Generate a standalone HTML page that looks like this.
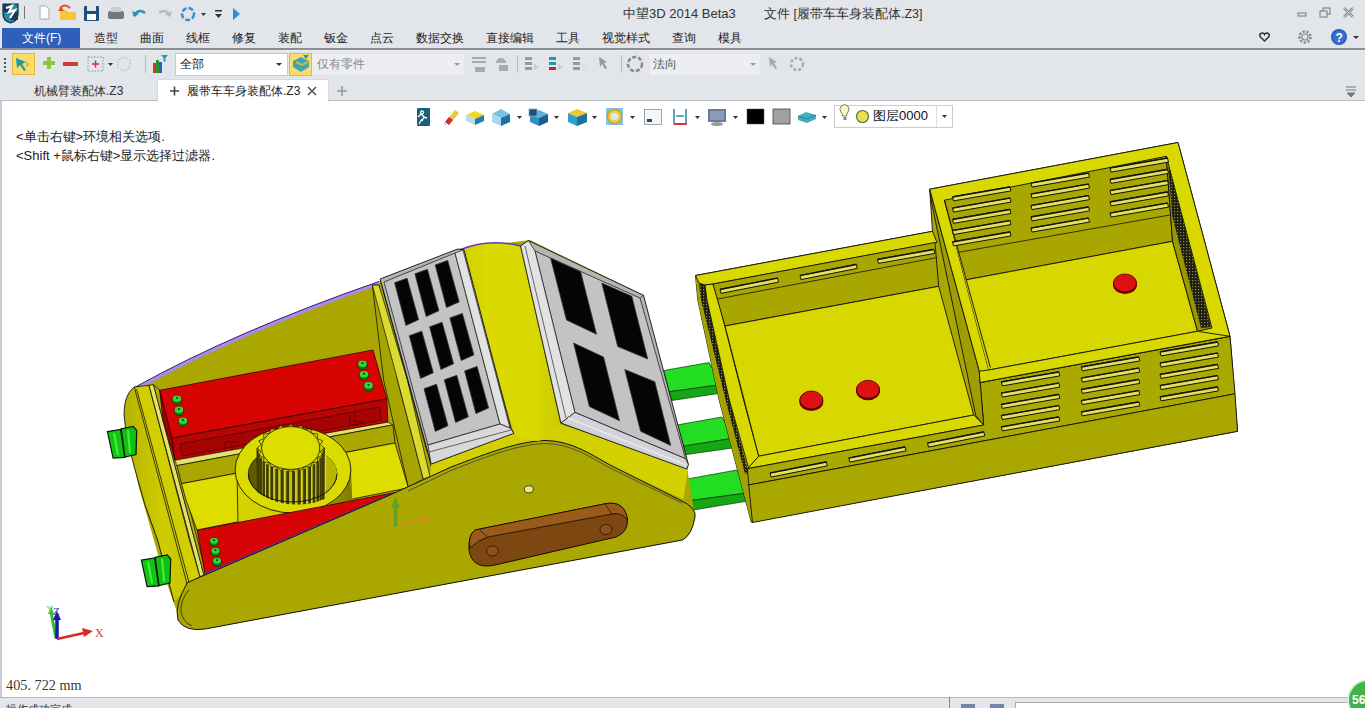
<!DOCTYPE html>
<html><head><meta charset="utf-8">
<style>
*{margin:0;padding:0;box-sizing:border-box}
html,body{width:1365px;height:708px;overflow:hidden;background:#e2e5e9;font-family:"Liberation Sans",sans-serif;position:relative}
.a{position:absolute}
.t{position:absolute;font-size:12px;color:#222;white-space:nowrap;line-height:14px}
#title{left:0;top:0;width:1365px;height:27px;background:#e2e5e9}
#menu{left:0;top:27px;width:1365px;height:23px;background:#e2e5e9;border-bottom:2px solid #8a8e94}
#tool{left:0;top:50px;width:1365px;height:29px;background:#e2e5e9;border-top:1px solid #eceef1}
#tabs{left:0;top:79px;width:1365px;height:22px;background:#e2e5e9;border-bottom:1px solid #b9bdc2}
#view{left:0;top:101px;width:1365px;height:596px;background:#fff;border-left:2px solid #c9ccd1}
#status{left:0;top:697px;width:1365px;height:11px;background:#e3e6ea;border-top:1px solid #b4b8bd}
</style></head><body>
<div class="a" id="title"></div>
<div class="a" id="menu"></div>
<div class="a" id="tool"></div>
<div class="a" id="tabs"></div>
<div class="a" id="view"></div>
<div class="a" id="status"></div>
<!-- TITLE BAR -->
<svg class="a" style="left:0;top:0" width="260" height="27" viewBox="0 0 260 27">
 <g>
  <path d="M3 4 L18 4 L18 14 Q18 21 10.5 23 Q3 21 3 14 Z" fill="#2a85a8" stroke="#0d2a3a" stroke-width="1.2"/><path d="M3 4 h7.5 v8 h-7.5z M10.5 12 h7.5 v8 h-7.5z" fill="#143c52"/>
  <path d="M6 8 L12 6 L9 12 L15 10 L10 18" stroke="#fff" stroke-width="2.2" fill="none"/>
 </g>
 <rect x="24" y="6" width="1" height="13" fill="#777"/>
 <path d="M40 6 h6 l3 3 v10 h-9 z" fill="#fff" stroke="#aaa" stroke-width="1"/>
 <path d="M60 10 h6 l2 2 h8 v8 h-16 z" fill="#f5c53a"/><path d="M61 6 l-3 5 h6 z" fill="#e2501e"/><path d="M60 8 q5 -5 10 0" stroke="#e2501e" stroke-width="2" fill="none"/>
 <rect x="84" y="6" width="15" height="15" rx="1" fill="#1f4e79"/><rect x="87" y="6" width="9" height="5" fill="#dfe6ee"/><rect x="87" y="14" width="9" height="6" fill="#fff"/>
 <rect x="108" y="11" width="16" height="8" rx="2" fill="#777"/><rect x="111" y="7" width="10" height="5" fill="#ccc"/>
 <path d="M134 16 q4 -8 11 -3" stroke="#2b8fb0" stroke-width="2.5" fill="none"/><path d="M132 11 l2 6 l5 -3z" fill="#2b8fb0"/>
 <path d="M170 16 q-4 -8 -11 -3" stroke="#b8bcc0" stroke-width="2.5" fill="none"/><path d="M172 11 l-2 6 l-5 -3z" fill="#b8bcc0"/>
 <circle cx="188" cy="14" r="6" stroke="#3c8ec2" stroke-width="2.5" fill="none" stroke-dasharray="5 2"/>
 <path d="M201 13 h5 l-2.5 3z" fill="#333"/>
 <rect x="215" y="10" width="7" height="1.5" fill="#333"/><path d="M215 14 h7 l-3.5 4z" fill="#333"/>
 <path d="M233 8 l7 6 l-7 6z" fill="#2b8fd6"/>
</svg>
<div class="t" style="left:623px;top:7px;font-size:13px;color:#333">中望3D 2014 Beta3</div>
<div class="t" style="left:764px;top:7px;font-size:12.5px;color:#333">文件 [履带车车身装配体.Z3]</div>
<svg class="a" style="left:1290px;top:0" width="75" height="27">
 <rect x="8" y="13" width="8" height="3" fill="none" stroke="#777" stroke-width="1"/>
 <rect x="33" y="8" width="7" height="6" fill="none" stroke="#777"/><rect x="30" y="11" width="7" height="6" fill="#e2e5e9" stroke="#777"/>
 <path d="M54 8 l9 9 M63 8 l-9 9" stroke="#888" stroke-width="2.5"/><path d="M54 8 l9 9 M63 8 l-9 9" stroke="#e2e5e9" stroke-width="0.8"/>
</svg>
<!-- MENU -->
<div class="a" style="left:2px;top:28px;width:78px;height:20px;background:#2f5fbd"></div>
<div class="t" style="left:22px;top:31px;color:#fff">文件(F)</div>
<div class="t" style="left:94px;top:31px">造型</div>
<div class="t" style="left:140px;top:31px">曲面</div>
<div class="t" style="left:186px;top:31px">线框</div>
<div class="t" style="left:232px;top:31px">修复</div>
<div class="t" style="left:278px;top:31px">装配</div>
<div class="t" style="left:324px;top:31px">钣金</div>
<div class="t" style="left:370px;top:31px">点云</div>
<div class="t" style="left:416px;top:31px">数据交换</div>
<div class="t" style="left:486px;top:31px">直接编辑</div>
<div class="t" style="left:556px;top:31px">工具</div>
<div class="t" style="left:602px;top:31px">视觉样式</div>
<div class="t" style="left:672px;top:31px">查询</div>
<div class="t" style="left:718px;top:31px">模具</div>
<svg class="a" style="left:1250px;top:27px" width="115" height="21">
 <path d="M14.5 14 l-4.5 -4.5 a2.3 2.3 0 0 1 4.5 -2 a2.3 2.3 0 0 1 4.5 2 z" fill="none" stroke="#333" stroke-width="1.4"/>
 <circle cx="55" cy="10" r="5.5" fill="none" stroke="#888" stroke-width="2.5" stroke-dasharray="2.2 1.6"/><circle cx="55" cy="10" r="3" fill="none" stroke="#888" stroke-width="1.2"/>
 <circle cx="89" cy="10" r="8" fill="#2a5ab5"/><circle cx="89" cy="10" r="6.5" fill="#3a6fd0"/><text x="85.5" y="14.5" font-size="12" font-weight="bold" fill="#fff" font-family="Liberation Sans">?</text>
 <path d="M103 9 h6 l-3 3z" fill="#333"/>
</svg>
<!-- TOOLBAR -->
<svg class="a" style="left:0;top:49px" width="820" height="30">
 <g fill="#555"><rect x="4" y="9" width="2" height="2"/><rect x="4" y="13" width="2" height="2"/><rect x="4" y="17" width="2" height="2"/><rect x="4" y="21" width="2" height="2"/></g>
 <rect x="12.5" y="4.5" width="22" height="21" fill="#fbdc6b" stroke="#e3b93a"/>
 <path d="M16 9 l10 4 l-4 2 l4 6 l-2 1 l-4 -6 l-3 3z" fill="#1a9bb0"/><path d="M26 12 l3 3 l-2 4z" fill="#e9a51a"/>
 <path d="M43 12 h4 v-4 h4 v4 h4 v4 h-4 v4 h-4 v-4 h-4z" fill="#8cc63e"/>
 <rect x="63" y="13" width="15" height="4" fill="#d33b3b"/>
 <rect x="88" y="8" width="15" height="14" fill="none" stroke="#6a9bc9" stroke-dasharray="1.5 1.5"/><path d="M92 15 h7 M95.5 11.5 v7" stroke="#e23" stroke-width="1.5"/>
 <path d="M108 14 h5 l-2.5 3z" fill="#333"/>
 <path d="M124 8 l6 3.5 v7 l-6 3.5 l-6 -3.5 v-7z" fill="none" stroke="#8fb4d8" stroke-dasharray="1.5 1.5"/>
 <rect x="145" y="6" width="1" height="18" fill="#bbb"/>
 <rect x="153" y="14" width="3" height="10" fill="#d3352b"/><rect x="156" y="11" width="3" height="13" fill="#2d8f3a"/><rect x="159" y="13" width="3" height="11" fill="#2f60b5"/>
 <path d="M161 6 h7 l-2.5 3 v4 l-2 -1 v-3z" fill="#1f9bb5"/>
 <rect x="175.5" y="4.5" width="112" height="22" fill="#fff" stroke="#c6c9ce"/>
 <path d="M276 14 h6 l-3 3z" fill="#333"/>
 <rect x="289.5" y="4.5" width="22" height="22" fill="#fbdc6b" stroke="#e3b93a"/>
 <path d="M293 12 l8 -4 l8 4 v6 l-8 5 l-8 -5z" fill="#3aa8b8"/><path d="M296 13 l6 3 l6 -3" stroke="#e8b020" stroke-width="2" fill="none"/><path d="M303 6 h6 l-3 4z" fill="#1f9bb5"/>
 <rect x="312" y="5" width="152" height="21" fill="#eceef1"/>
 <path d="M454 14 h6 l-3 3z" fill="#999"/>
 <g fill="#aaa"><rect x="472" y="8" width="14" height="2"/><rect x="472" y="12" width="14" height="2"/><rect x="475" y="18" width="10" height="5"/></g>
 <g fill="#aaa"><path d="M496 14 a5 5 0 0 1 10 0z"/><rect x="499" y="16" width="9" height="6"/></g>
 <rect x="517" y="6" width="1" height="18" fill="#bbb"/>
 <g fill="#999"><rect x="525" y="8" width="7" height="3"/><rect x="525" y="13" width="7" height="3"/><rect x="525" y="18" width="7" height="3"/><path d="M534 14 l5 5 l-5 2z" fill="#ccc"/></g>
 <g><rect x="549" y="8" width="7" height="3" fill="#1b9aa8"/><rect x="549" y="13" width="7" height="3" fill="#1b9aa8"/><rect x="549" y="18" width="7" height="3" fill="#c23"/><path d="M558 14 l5 5 l-5 2z" fill="#ccc"/></g>
 <g fill="#999"><rect x="573" y="8" width="7" height="3"/><rect x="573" y="13" width="7" height="3"/><rect x="573" y="18" width="7" height="3"/><path d="M582 14 l5 5 l-5 2z" fill="#ddd"/></g>
 <path d="M599 8 l8 5 l-3 1 l3 5 l-2 1 l-3 -5 l-2 3z" fill="#999"/>
 <rect x="621" y="6" width="1" height="18" fill="#bbb"/>
 <circle cx="635" cy="15" r="7" fill="none" stroke="#888" stroke-width="2.5" stroke-dasharray="4 2"/>
 <rect x="650" y="5" width="110" height="21" fill="#eceef1"/>
 <path d="M750 14 h6 l-3 3z" fill="#999"/>
 <path d="M769 8 l8 5 l-3 1 l3 5 l-2 1 l-3 -5 l-2 3z" fill="#aaa"/>
 <circle cx="797" cy="15" r="6" fill="none" stroke="#aaa" stroke-width="2.5" stroke-dasharray="3 2"/>
</svg>
<div class="t" style="left:180px;top:57px;color:#111">全部</div>
<div class="t" style="left:317px;top:57px;color:#888">仅有零件</div>
<div class="t" style="left:653px;top:57px;color:#555">法向</div>
<!-- TABS -->
<div class="t" style="left:34px;top:84px;color:#333">机械臂装配体.Z3</div>
<div class="a" style="left:157px;top:79px;width:172px;height:23px;background:#fff;border:1px solid #d6d9dd;border-bottom:none"></div>
<svg class="a" style="left:165px;top:82px" width="200" height="18">
 <path d="M5 9 h9 M9.5 4.5 v9" stroke="#444" stroke-width="1.6"/>
 <path d="M143 5 l8 8 M151 5 l-8 8" stroke="#555" stroke-width="1.6"/>
 <path d="M172 9 h10 M177 4 v10" stroke="#999" stroke-width="1.6"/>
</svg>
<div class="t" style="left:187px;top:84px;color:#222">履带车车身装配体.Z3</div>
<svg class="a" style="left:1340px;top:82px" width="25" height="18"><path d="M6 5 h10 M6 8 h10 M7 11 l4 4 l4 -4z" stroke="#777" fill="#777" stroke-width="1"/></svg>
<!-- STATUS -->
<div class="a" style="left:949px;top:697px;width:1px;height:11px;background:#888"></div>
<div class="a" style="left:961px;top:704px;width:14px;height:4px;background:#7486b0"></div>
<div class="a" style="left:990px;top:704px;width:14px;height:4px;background:#7486b0"></div>
<div class="a" style="left:1015px;top:702px;width:350px;height:6px;background:#fff;border-top:1px solid #aaa;border-left:1px solid #aaa"></div>
<div class="a" style="left:1347px;top:679px;width:42px;height:42px;border-radius:50%;background:#43b04a;border:2px solid #d7f0d6"></div>
<div class="t" style="left:1352px;top:693px;color:#fff;font-weight:bold;font-size:12px">56</div>
<div class="t" style="left:6px;top:702px;color:#333;font-size:11px">操作成功完成</div>
<div class="t" style="left:16px;top:129px;font-size:13px;color:#222;line-height:16px">&lt;单击右键&gt;环境相关选项.</div>
<div class="t" style="left:16px;top:148px;font-size:13px;color:#222;line-height:16px">&lt;Shift +鼠标右键&gt;显示选择过滤器.</div>
<svg class="a" style="left:400px;top:101px" width="560" height="30">
 <!-- exit -->
 <rect x="17" y="7" width="13" height="18" rx="1" fill="#1d5f7a"/>
 <path d="M22 10 a1.5 1.5 0 1 0 0.1 0 M21 13 l3 3 l-2 4 M23 16 l4 1 M21 13 l-3 3 M22 18 l-3 5" stroke="#fff" stroke-width="1.3" fill="none"/>
 <!-- eraser -->
 <path d="M45 21 l10 -12 l4 3 l-10 12z" fill="#e8c840"/><path d="M45 21 l4 -5 l4 3 l-4 5z" fill="#c83040"/><path d="M44 22 l2 2" stroke="#aaa"/>
 <!-- box yellow -->
 <path d="M66 14 l9 -4 l9 4 l-9 4z" fill="#f0d820"/><path d="M66 14 v6 l9 4 v-6z" fill="#b8dcef"/><path d="M84 14 v6 l-9 4 v-6z" fill="#2a78a8"/>
 <!-- blue cube -->
 <path d="M92 13 l9 -5 l9 5 l-9 4z" fill="#7ac0e0"/><path d="M92 13 v8 l9 4 v-8z" fill="#a8d8f0"/><path d="M110 13 v8 l-9 4 v-8z" fill="#1f6f9f"/>
 <path d="M117 15 h5 l-2.5 3z" fill="#333"/>
 <!-- screen box -->
 <path d="M130 13 l9 -4 l9 4 l-9 4z" fill="#5ab0d8"/><path d="M130 13 v8 l9 4 v-8z" fill="#2f8fc0"/><path d="M148 13 v8 l-9 4 v-8z" fill="#1b5f8f"/><rect x="129" y="8" width="8" height="7" fill="#1b4f7a" stroke="#8ac" stroke-width="0.8"/>
 <path d="M154 15 h5 l-2.5 3z" fill="#333"/>
 <!-- box yellow top blue -->
 <path d="M168 12 l9 -4 l10 4 l-10 4z" fill="#f0c830"/><path d="M168 12 v9 l9 4 v-9z" fill="#2f9fd0"/><path d="M187 12 v9 l-10 4 v-9z" fill="#1f6fa0"/>
 <path d="M192 15 h5 l-2.5 3z" fill="#333"/>
 <!-- ring -->
 <rect x="206" y="7" width="17" height="17" fill="#7ec3e8"/><circle cx="214.5" cy="15.5" r="7" fill="#e8d060" stroke="#c8a020" stroke-width="1.5"/><circle cx="214.5" cy="15.5" r="3.5" fill="#dfe8f0"/>
 <path d="M230 15 h5 l-2.5 3z" fill="#333"/>
 <!-- frame -->
 <rect x="244.5" y="8.5" width="17" height="15" fill="#f4f6f8" stroke="#9aa"/><rect x="247" y="18" width="5" height="3" fill="#1e4f6a"/>
 <!-- dim -->
 <path d="M274 8 v15 M286 8 v15 M276 15 h8" stroke="#3a8ca8" stroke-width="1.6"/><rect x="274" y="22" width="13" height="2" fill="#d33"/>
 <path d="M295 15 h5 l-2.5 3z" fill="#333"/>
 <!-- monitor -->
 <rect x="308" y="8" width="18" height="13" fill="#6a7a98"/><rect x="310" y="10" width="14" height="9" fill="#8a9ab8"/><ellipse cx="317" cy="23" rx="6" ry="2" fill="#999"/>
 <path d="M333 15 h5 l-2.5 3z" fill="#333"/>
 <rect x="347" y="8" width="17" height="15" fill="#000" stroke="#555" stroke-width="0.5"/>
 <rect x="373" y="8" width="17" height="15" fill="#a0a0a0" stroke="#444" stroke-width="0.8"/>
 <path d="M398 15 l8 -4 l10 3 v4 l-9 4 l-9 -3z" fill="#40b0c0"/><path d="M398 15 l9 3 l9 -4" stroke="#2a8090" fill="none"/>
 <path d="M422 15 h5 l-2.5 3z" fill="#333"/>
 <rect x="434.5" y="4.5" width="118" height="22" fill="#fff" stroke="#ccc"/>
 <line x1="536.5" y1="5" x2="536.5" y2="26" stroke="#ddd"/>
 <path d="M441 11 a4.5 4.5 0 1 1 7 0 q-1.5 2 -1.5 4 h-4 q0 -2 -1.5 -4z" fill="#fff8c0" stroke="#555" stroke-width="0.8"/><rect x="443.5" y="16" width="3" height="3" fill="#888"/>
 <circle cx="462.5" cy="15.5" r="6" fill="#e8e050" stroke="#4a7a3a" stroke-width="1.2"/>
 <path d="M542 14 h5 l-2.5 3z" fill="#333"/>
</svg>
<div class="t" style="left:873px;top:108px;font-size:13px;color:#111;line-height:16px">图层0000</div>
<!-- triad -->
<svg class="a" style="left:40px;top:598px" width="70" height="46">
 <line x1="16" y1="40" x2="11" y2="14" stroke="#33bb33" stroke-width="3"/>
 <path d="M8 16 l3 -8 l3 8z" fill="#33bb33"/>
 <line x1="17" y1="41" x2="17" y2="20" stroke="#1a1aaa" stroke-width="3.5"/>
 <path d="M13 22 l4 -9 l4 9z" fill="#1a1aaa"/>
 <line x1="17" y1="41" x2="44" y2="35" stroke="#d82a2a" stroke-width="2.5"/>
 <path d="M42 30 l11 3 l-9 6z" fill="#d82a2a"/>
 <text x="6" y="15" font-size="11" fill="#7bd07b" font-family="Liberation Serif">Y</text>
 <text x="13" y="17" font-size="11" fill="#3a3aaa" font-family="Liberation Serif">Z</text>
 <text x="55" y="39" font-size="12" fill="#d84040" font-family="Liberation Serif">X</text>
</svg>
<div class="t" style="left:6px;top:677px;font-family:'Liberation Serif',serif;font-size:15px;color:#3a3a3a;line-height:16px;transform:scaleX(0.95);transform-origin:0 0">405.&nbsp;722 mm</div>
<svg class="a" style="left:0;top:0" width="1365" height="708" viewBox="0 0 1365 708">
<polygon points="663.8,370.5 709.0,362.6 721.0,384.6 669.0,391.8" fill="#22dd22" stroke="#063306" stroke-width="0.7" />
<polygon points="669.0,391.8 721.6,384.6 721.6,393.0 671.8,400.5" fill="#15a815" stroke="#063306" stroke-width="0.7" />
<polygon points="677.0,425.0 722.0,417.0 734.0,438.0 683.7,446.2" fill="#22dd22" stroke="#063306" stroke-width="0.7" />
<polygon points="683.7,446.2 734.9,438.0 736.0,447.5 685.0,454.7" fill="#15a815" stroke="#063306" stroke-width="0.7" />
<polygon points="685.0,479.4 736.8,470.0 748.8,492.7 690.4,500.6" fill="#22dd22" stroke="#063306" stroke-width="0.7" />
<polygon points="690.4,500.6 749.5,492.7 750.8,500.6 693.0,510.0" fill="#15a815" stroke="#063306" stroke-width="0.7" />
<defs><pattern id="mesh" width="3" height="3" patternUnits="userSpaceOnUse"><rect width="3" height="3" fill="#1e1e10"/><rect x="1" y="1" width="1.2" height="1.2" fill="#8c8a50"/></pattern></defs>
<path d="M695.5,275.5 L932.5,231.3 L929.7,189.2 L1178,142.5 L1230,336.3 L1237.5,431.3 L751.3,522.2 L719.2,400 L697.8,300 Z" fill="#aaa800" stroke="#111" stroke-width="0.9"/>
<path d="M695.5,275.5 L697.8,300 L719.2,400 L751.3,522.2 L747.7,469.8 L748.6,473.5 L729.3,400 L707,300 L705,285 Z" fill="#a4a200" stroke="none"/>
<polygon points="699.0,283.0 701.0,300.0 725.6,400.0 744.9,473.5 748.6,473.5 729.3,400.0 707.0,300.0 705.0,285.0" fill="url(#mesh)" stroke="none" />
<polygon points="695.5,275.5 932.5,231.3 937.0,242.5 713.0,284.0 705.0,285.0 699.0,283.0" fill="#d9d900" stroke="#111" stroke-width="0.9" />
<polygon points="705.0,285.0 713.0,284.0 718.2,300.0 743.6,400.0 758.7,456.2 748.6,468.0 729.3,400.0 707.0,300.0" fill="#d9d900" stroke="#111" stroke-width="0.9" />
<polygon points="713.0,284.0 935.0,242.5 938.7,286.3 725.0,326.0" fill="#a9a600" stroke="#111" stroke-width="0.9" />
<line x1="717.5" y1="299" x2="937.5" y2="257.5" stroke="#111" stroke-width="0.8"/>
<polygon points="725.0,326.0 938.7,286.3 973.7,415.0 758.7,456.2" fill="#d8d800" stroke="#111" stroke-width="0.9" />
<polygon points="747.5,468.7 758.7,456.2 973.7,415.0 983.7,425.0" fill="#d9d900" stroke="#111" stroke-width="0.9" />
<polygon points="747.5,468.7 983.7,425.0 980.0,382.5 1230.0,336.3 1235.0,393.8 748.7,485.0" fill="#aaa900" stroke="#111" stroke-width="0.9" />
<polygon points="748.7,485.0 1235.0,393.8 1237.5,431.3 752.5,522.5" fill="#aaa800" stroke="#111" stroke-width="0.9" />
<polygon points="929.7,189.2 931.5,202.0 975.7,415.3 983.7,425.0 979.3,371.2" fill="#a09d00" stroke="#111" stroke-width="0.9" />
<polygon points="929.7,189.2 1178.0,142.5 1230.0,336.3 980.0,382.5 979.3,371.2" fill="#d9d900" stroke="#111" stroke-width="0.9" />
<polygon points="944.4,200.2 1166.3,156.3 1172.5,241.3 965.0,280.0" fill="#a9a600" stroke="#111" stroke-width="0.9" />
<line x1="957.5" y1="252.5" x2="1170" y2="215" stroke="#111" stroke-width="0.8"/>
<polygon points="965.0,280.0 1172.5,241.3 1197.5,331.3 988.7,370.0" fill="#d8d800" stroke="#111" stroke-width="0.9" />
<polygon points="944.4,200.2 965.0,280.0 988.7,370.0 990.4,367.5" fill="#cccb00" stroke="none" />
<line x1="944.4" y1="200.2" x2="990.4" y2="367.5" stroke="#111" stroke-width="0.9"/>
<polygon points="1166.3,156.3 1172.5,241.3 1197.5,331.3 1212.0,328.0" fill="#9a9700" stroke="#111" stroke-width="0.9" />
<polygon points="1168.0,162.0 1172.0,215.0 1201.0,328.0 1211.0,327.0" fill="url(#mesh)" stroke="none" />
<polygon points="979.3,371.2 988.7,370.0 1197.5,331.3 1230.0,336.3 980.0,382.5" fill="#d9d900" stroke="#111" stroke-width="0.9" />
<polygon points="720.0,289.2 777.5,277.9 778.5,282.1 721.0,293.4" fill="#e0df66" stroke="#151500" stroke-width="1"/><line x1="720" y1="289.5" x2="777.5" y2="278.2" stroke="#151500" stroke-width="1.3"/>
<polygon points="800.0,275.4 856.3,264.2 857.3,268.4 801.0,279.6" fill="#e0df66" stroke="#151500" stroke-width="1"/><line x1="800" y1="275.7" x2="856.3" y2="264.5" stroke="#151500" stroke-width="1.3"/>
<polygon points="877.5,259.2 933.8,249.2 934.8,253.4 878.5,263.4" fill="#e0df66" stroke="#151500" stroke-width="1"/><line x1="877.5" y1="259.5" x2="933.8" y2="249.50000000000003" stroke="#151500" stroke-width="1.3"/>
<polygon points="770.0,472.9 826.3,461.7 827.3,465.9 771.0,477.1" fill="#e0df66" stroke="#151500" stroke-width="1"/><line x1="770" y1="473.2" x2="826.3" y2="462.0" stroke="#151500" stroke-width="1.3"/>
<polygon points="848.8,457.9 905.0,446.7 906.0,450.9 849.8,462.1" fill="#e0df66" stroke="#151500" stroke-width="1"/><line x1="848.8" y1="458.2" x2="905" y2="447.0" stroke="#151500" stroke-width="1.3"/>
<polygon points="927.5,442.9 983.8,431.7 984.8,435.9 928.5,447.1" fill="#e0df66" stroke="#151500" stroke-width="1"/><line x1="927.5" y1="443.2" x2="983.8" y2="432.0" stroke="#151500" stroke-width="1.3"/>
<polygon points="952.5,196.7 1010.0,186.7 1011.0,190.9 953.5,200.9" fill="#e0df66" stroke="#151500" stroke-width="1"/><line x1="952.5" y1="197.00000000000003" x2="1010.0" y2="187.00000000000003" stroke="#151500" stroke-width="1.3"/>
<polygon points="952.5,207.9 1010.0,197.9 1011.0,202.1 953.5,212.1" fill="#e0df66" stroke="#151500" stroke-width="1"/><line x1="952.5" y1="208.20000000000002" x2="1010.0" y2="198.20000000000002" stroke="#151500" stroke-width="1.3"/>
<polygon points="952.5,219.2 1010.0,209.2 1011.0,213.4 953.5,223.4" fill="#e0df66" stroke="#151500" stroke-width="1"/><line x1="952.5" y1="219.50000000000003" x2="1010.0" y2="209.50000000000003" stroke="#151500" stroke-width="1.3"/>
<polygon points="952.5,230.4 1010.0,220.4 1011.0,224.6 953.5,234.6" fill="#e0df66" stroke="#151500" stroke-width="1"/><line x1="952.5" y1="230.70000000000002" x2="1010.0" y2="220.70000000000002" stroke="#151500" stroke-width="1.3"/>
<polygon points="952.5,241.7 1010.0,231.7 1011.0,235.9 953.5,245.9" fill="#e0df66" stroke="#151500" stroke-width="1"/><line x1="952.5" y1="242.00000000000003" x2="1010.0" y2="232.00000000000003" stroke="#151500" stroke-width="1.3"/>
<polygon points="1031.0,182.9 1088.5,172.9 1089.5,177.1 1032.0,187.1" fill="#e0df66" stroke="#151500" stroke-width="1"/><line x1="1031" y1="183.20000000000002" x2="1088.5" y2="173.20000000000002" stroke="#151500" stroke-width="1.3"/>
<polygon points="1031.0,193.9 1088.5,183.9 1089.5,188.1 1032.0,198.1" fill="#e0df66" stroke="#151500" stroke-width="1"/><line x1="1031" y1="194.20000000000002" x2="1088.5" y2="184.20000000000002" stroke="#151500" stroke-width="1.3"/>
<polygon points="1031.0,205.4 1088.5,195.4 1089.5,199.6 1032.0,209.6" fill="#e0df66" stroke="#151500" stroke-width="1"/><line x1="1031" y1="205.70000000000002" x2="1088.5" y2="195.70000000000002" stroke="#151500" stroke-width="1.3"/>
<polygon points="1031.0,216.7 1088.5,206.7 1089.5,210.9 1032.0,220.9" fill="#e0df66" stroke="#151500" stroke-width="1"/><line x1="1031" y1="217.00000000000003" x2="1088.5" y2="207.00000000000003" stroke="#151500" stroke-width="1.3"/>
<polygon points="1031.0,227.9 1088.5,217.9 1089.5,222.1 1032.0,232.1" fill="#e0df66" stroke="#151500" stroke-width="1"/><line x1="1031" y1="228.20000000000002" x2="1088.5" y2="218.20000000000002" stroke="#151500" stroke-width="1.3"/>
<polygon points="1110.0,167.9 1167.5,157.9 1168.5,162.1 1111.0,172.1" fill="#e0df66" stroke="#151500" stroke-width="1"/><line x1="1110" y1="168.20000000000002" x2="1167.5" y2="158.20000000000002" stroke="#151500" stroke-width="1.3"/>
<polygon points="1110.0,179.2 1167.5,169.2 1168.5,173.4 1111.0,183.4" fill="#e0df66" stroke="#151500" stroke-width="1"/><line x1="1110" y1="179.50000000000003" x2="1167.5" y2="169.50000000000003" stroke="#151500" stroke-width="1.3"/>
<polygon points="1110.0,190.4 1167.5,180.4 1168.5,184.6 1111.0,194.6" fill="#e0df66" stroke="#151500" stroke-width="1"/><line x1="1110" y1="190.70000000000002" x2="1167.5" y2="180.70000000000002" stroke="#151500" stroke-width="1.3"/>
<polygon points="1110.0,201.7 1167.5,191.7 1168.5,195.9 1111.0,205.9" fill="#e0df66" stroke="#151500" stroke-width="1"/><line x1="1110" y1="202.00000000000003" x2="1167.5" y2="192.00000000000003" stroke="#151500" stroke-width="1.3"/>
<polygon points="1110.0,212.9 1167.5,202.9 1168.5,207.1 1111.0,217.1" fill="#e0df66" stroke="#151500" stroke-width="1"/><line x1="1110" y1="213.20000000000002" x2="1167.5" y2="203.20000000000002" stroke="#151500" stroke-width="1.3"/>
<polygon points="1001.3,381.7 1058.8,371.7 1059.8,375.9 1002.3,385.9" fill="#e0df66" stroke="#151500" stroke-width="1"/><line x1="1001.3" y1="382.0" x2="1058.8" y2="372.0" stroke="#151500" stroke-width="1.3"/>
<polygon points="1001.3,392.9 1058.8,382.9 1059.8,387.1 1002.3,397.1" fill="#e0df66" stroke="#151500" stroke-width="1"/><line x1="1001.3" y1="393.2" x2="1058.8" y2="383.2" stroke="#151500" stroke-width="1.3"/>
<polygon points="1001.3,404.2 1058.8,394.2 1059.8,398.4 1002.3,408.4" fill="#e0df66" stroke="#151500" stroke-width="1"/><line x1="1001.3" y1="404.5" x2="1058.8" y2="394.5" stroke="#151500" stroke-width="1.3"/>
<polygon points="1001.3,415.4 1058.8,405.4 1059.8,409.6 1002.3,419.6" fill="#e0df66" stroke="#151500" stroke-width="1"/><line x1="1001.3" y1="415.7" x2="1058.8" y2="405.7" stroke="#151500" stroke-width="1.3"/>
<polygon points="1001.3,426.7 1058.8,416.7 1059.8,420.9 1002.3,430.9" fill="#e0df66" stroke="#151500" stroke-width="1"/><line x1="1001.3" y1="427.0" x2="1058.8" y2="417.0" stroke="#151500" stroke-width="1.3"/>
<polygon points="1081.3,366.7 1138.8,356.7 1139.8,360.9 1082.3,370.9" fill="#e0df66" stroke="#151500" stroke-width="1"/><line x1="1081.3" y1="367.0" x2="1138.8" y2="357.0" stroke="#151500" stroke-width="1.3"/>
<polygon points="1081.3,377.9 1138.8,367.9 1139.8,372.1 1082.3,382.1" fill="#e0df66" stroke="#151500" stroke-width="1"/><line x1="1081.3" y1="378.2" x2="1138.8" y2="368.2" stroke="#151500" stroke-width="1.3"/>
<polygon points="1081.3,389.2 1138.8,379.2 1139.8,383.4 1082.3,393.4" fill="#e0df66" stroke="#151500" stroke-width="1"/><line x1="1081.3" y1="389.5" x2="1138.8" y2="379.5" stroke="#151500" stroke-width="1.3"/>
<polygon points="1081.3,400.4 1138.8,390.4 1139.8,394.6 1082.3,404.6" fill="#e0df66" stroke="#151500" stroke-width="1"/><line x1="1081.3" y1="400.7" x2="1138.8" y2="390.7" stroke="#151500" stroke-width="1.3"/>
<polygon points="1081.3,411.7 1138.8,401.7 1139.8,405.9 1082.3,415.9" fill="#e0df66" stroke="#151500" stroke-width="1"/><line x1="1081.3" y1="412.0" x2="1138.8" y2="402.0" stroke="#151500" stroke-width="1.3"/>
<polygon points="1160.0,351.7 1217.5,341.7 1218.5,345.9 1161.0,355.9" fill="#e0df66" stroke="#151500" stroke-width="1"/><line x1="1160" y1="352.0" x2="1217.5" y2="342.0" stroke="#151500" stroke-width="1.3"/>
<polygon points="1160.0,362.9 1217.5,352.9 1218.5,357.1 1161.0,367.1" fill="#e0df66" stroke="#151500" stroke-width="1"/><line x1="1160" y1="363.2" x2="1217.5" y2="353.2" stroke="#151500" stroke-width="1.3"/>
<polygon points="1160.0,374.2 1217.5,364.2 1218.5,368.4 1161.0,378.4" fill="#e0df66" stroke="#151500" stroke-width="1"/><line x1="1160" y1="374.5" x2="1217.5" y2="364.5" stroke="#151500" stroke-width="1.3"/>
<polygon points="1160.0,385.4 1217.5,375.4 1218.5,379.6 1161.0,389.6" fill="#e0df66" stroke="#151500" stroke-width="1"/><line x1="1160" y1="385.7" x2="1217.5" y2="375.7" stroke="#151500" stroke-width="1.3"/>
<polygon points="1160.0,396.7 1217.5,386.7 1218.5,390.9 1161.0,400.9" fill="#e0df66" stroke="#151500" stroke-width="1"/><line x1="1160" y1="397.0" x2="1217.5" y2="387.0" stroke="#151500" stroke-width="1.3"/>
<ellipse cx="811.3" cy="401.5" rx="12" ry="9.5" fill="#6a0000"/><ellipse cx="811.3" cy="400" rx="11.5" ry="9" fill="#dd1111" stroke="#400" stroke-width="0.8"/>
<ellipse cx="868" cy="390.8" rx="12" ry="9.5" fill="#6a0000"/><ellipse cx="868" cy="389.3" rx="11.5" ry="9" fill="#dd1111" stroke="#400" stroke-width="0.8"/>
<ellipse cx="1125" cy="284.5" rx="12" ry="9.5" fill="#6a0000"/><ellipse cx="1125" cy="283" rx="11.5" ry="9" fill="#dd1111" stroke="#400" stroke-width="0.8"/>
<path d="M134.5,388 Q235,332 379,282 L381,279 L457.5,249 L530,240 L643.5,295 L686.6,465 L695,517 L682.5,540 L205,629 L177,612 L163,572 L138,484 L124,410 Z" fill="#aaa800" stroke="none"/>
<path d="M135,389.5 Q235,333.5 379,283.5" fill="none" stroke="#a88af0" stroke-width="3.2"/>
<path d="M134.5,387.5 Q235,331.5 379,281.5" fill="none" stroke="#2a1a60" stroke-width="1"/>
<defs><linearGradient id="cap" x1="0" y1="0" x2="1" y2="0"><stop offset="0" stop-color="#b5b200"/><stop offset="0.6" stop-color="#cfcc00"/><stop offset="1" stop-color="#c8c500"/></linearGradient></defs>
<path d="M134.3,387 C128,392 124,400 124.1,415 C126,440 135,470 145,505 L157.6,540 L174,602 L188,587.3 Z" fill="url(#cap)" stroke="none"/>
<path d="M134.3,387 C128,392 124,400 124.1,415 C126,440 135,470 145,505 L157.6,540 L174,602" fill="none" stroke="#111" stroke-width="0.9"/>
<polygon points="134.3,387.0 149.0,385.3 189.4,540.0 200.0,576.7 188.0,587.3" fill="#d2cf00" stroke="#111" stroke-width="0.8" />
<polygon points="149.0,385.3 153.5,384.7 204.0,575.0 200.0,576.7" fill="#e4e26a" stroke="#111" stroke-width="0.8" />
<line x1="136.6" y1="389.2" x2="190" y2="586" stroke="#111" stroke-width="0.8"/>
<polygon points="153.5,384.7 160.0,390.3 206.0,573.9 204.0,575.0" fill="#b0ad00" stroke="#111" stroke-width="0.7" />
<polygon points="159.7,390.3 373.0,350.0 386.8,398.9 171.8,438.0" fill="#d80404" stroke="#300" stroke-width="0.8" />
<polygon points="159.7,390.3 171.8,438.0 175.0,460.3 163.0,420.0" fill="#a80000" stroke="#300" stroke-width="0.8" />
<polygon points="171.8,438.0 386.8,398.9 387.9,422.2 175.0,460.3" fill="#b80404" stroke="#300" stroke-width="0.8" />
<polygon points="180.0,444.0 380.0,407.0 381.0,420.0 182.0,456.0" fill="#a80303" stroke="#4a0000" stroke-width="0.7" />
<path d="M225,450 v-8 h12 M232,444 v10 M350,415 v10 h8 M355,410 v12 h8" stroke="#600" stroke-width="1" fill="none"/>
<ellipse cx="177" cy="400.09999999999997" rx="4.8" ry="4.4" fill="#0f7a0f" stroke="#062806" stroke-width="0.6"/><ellipse cx="177" cy="398.59999999999997" rx="4.2" ry="3.2" fill="#3ad23a"/><circle cx="177" cy="398.09999999999997" r="1.1" fill="#0a500a"/>
<ellipse cx="179" cy="411.2" rx="4.8" ry="4.4" fill="#0f7a0f" stroke="#062806" stroke-width="0.6"/><ellipse cx="179" cy="409.7" rx="4.2" ry="3.2" fill="#3ad23a"/><circle cx="179" cy="409.2" r="1.1" fill="#0a500a"/>
<ellipse cx="183" cy="422.2" rx="4.8" ry="4.4" fill="#0f7a0f" stroke="#062806" stroke-width="0.6"/><ellipse cx="183" cy="420.7" rx="4.2" ry="3.2" fill="#3ad23a"/><circle cx="183" cy="420.2" r="1.1" fill="#0a500a"/>
<ellipse cx="362.5" cy="365.2" rx="4.8" ry="4.4" fill="#0f7a0f" stroke="#062806" stroke-width="0.6"/><ellipse cx="362.5" cy="363.7" rx="4.2" ry="3.2" fill="#3ad23a"/><circle cx="362.5" cy="363.2" r="1.1" fill="#0a500a"/>
<ellipse cx="364" cy="375.7" rx="4.8" ry="4.4" fill="#0f7a0f" stroke="#062806" stroke-width="0.6"/><ellipse cx="364" cy="374.2" rx="4.2" ry="3.2" fill="#3ad23a"/><circle cx="364" cy="373.7" r="1.1" fill="#0a500a"/>
<ellipse cx="368.6" cy="386.8" rx="4.8" ry="4.4" fill="#0f7a0f" stroke="#062806" stroke-width="0.6"/><ellipse cx="368.6" cy="385.3" rx="4.2" ry="3.2" fill="#3ad23a"/><circle cx="368.6" cy="384.8" r="1.1" fill="#0a500a"/>
<polygon points="175.0,460.3 387.9,422.2 392.9,424.9 177.0,465.6" fill="#e4e26a" stroke="#111" stroke-width="0.6" />
<polygon points="177.0,465.6 392.9,424.9 395.0,443.0 181.5,483.7" fill="#aaa700" stroke="#111" stroke-width="0.8" />
<polygon points="181.5,483.7 395.0,443.0 408.4,487.8 197.0,530.0 186.0,500.0" fill="#dfdd00" stroke="#111" stroke-width="0.8" />
<polygon points="372.4,285.2 383.6,380.0 408.4,487.8 423.2,478.9 397.5,380.0 378.9,285.0" fill="#a8a500" stroke="#111" stroke-width="0.8" />
<polygon points="372.4,285.2 378.9,285.0 407.4,380.0 430.1,477.0 423.2,478.9 397.5,380.0" fill="#dcda30" stroke="#111" stroke-width="0.7" />
<polyline points="381,283 410,380 433,474" fill="none" stroke="#111" stroke-width="0.7"/>
<defs><linearGradient id="hous" x1="0" y1="0" x2="1" y2="0"><stop offset="0" stop-color="#d6d400"/><stop offset="0.55" stop-color="#d0ce00"/><stop offset="0.8" stop-color="#9a9700"/><stop offset="1" stop-color="#7e7b00"/></linearGradient><clipPath id="holeclip"><path d="M240,420 L345,420 L345,474 A44.3,28 0 0 1 248.3,474 Z"/></clipPath></defs>
<path d="M235.1,470 L237,522 Q292,548 353,517 L350.9,470 Z" fill="url(#hous)" stroke="none"/>
<path d="M237,470 L238,522" stroke="#111" stroke-width="0.8"/>
<ellipse cx="293" cy="470" rx="57.9" ry="43" fill="#dcdb00" stroke="#111" stroke-width="0.9"/>
<ellipse cx="292.6" cy="474" rx="44.3" ry="28" fill="#5e5b00" stroke="#111" stroke-width="0.8"/>
<path d="M318,450 Q338,462 336.9,474 Q334,492 318,500 Z" fill="#b8b500"/>
<g clip-path="url(#holeclip)"><path d="M257,448 L258,500 Q291,512 324,500 L324.4,448 Z" fill="#bebb00" stroke="#111" stroke-width="0.8"/>
<line x1="257.8" y1="450.0" x2="257.8" y2="505.7" stroke="#3e3c00" stroke-width="1.9"/>
<line x1="260.0" y1="450.0" x2="260.0" y2="505.7" stroke="#dedc50" stroke-width="0.8"/>
<line x1="258.8" y1="454.0" x2="258.8" y2="507.1" stroke="#3e3c00" stroke-width="2.1"/>
<line x1="261.0" y1="454.0" x2="261.0" y2="507.1" stroke="#dedc50" stroke-width="0.8"/>
<line x1="260.8" y1="457.7" x2="260.8" y2="508.4" stroke="#3e3c00" stroke-width="2.3"/>
<line x1="263.0" y1="457.7" x2="263.0" y2="508.4" stroke="#dedc50" stroke-width="0.8"/>
<line x1="263.7" y1="461.2" x2="263.7" y2="509.6" stroke="#3e3c00" stroke-width="2.5"/>
<line x1="265.9" y1="461.2" x2="265.9" y2="509.6" stroke="#dedc50" stroke-width="0.8"/>
<line x1="267.4" y1="464.3" x2="267.4" y2="510.7" stroke="#3e3c00" stroke-width="2.6"/>
<line x1="269.6" y1="464.3" x2="269.6" y2="510.7" stroke="#dedc50" stroke-width="0.8"/>
<line x1="271.8" y1="466.8" x2="271.8" y2="511.6" stroke="#3e3c00" stroke-width="2.8"/>
<line x1="274.0" y1="466.8" x2="274.0" y2="511.6" stroke="#dedc50" stroke-width="0.8"/>
<line x1="276.8" y1="468.8" x2="276.8" y2="512.3" stroke="#3e3c00" stroke-width="2.9"/>
<line x1="279.0" y1="468.8" x2="279.0" y2="512.3" stroke="#dedc50" stroke-width="0.8"/>
<line x1="282.2" y1="470.2" x2="282.2" y2="512.7" stroke="#3e3c00" stroke-width="3.0"/>
<line x1="284.4" y1="470.2" x2="284.4" y2="512.7" stroke="#dedc50" stroke-width="0.8"/>
<line x1="287.8" y1="470.9" x2="287.8" y2="513.0" stroke="#3e3c00" stroke-width="3.0"/>
<line x1="290.0" y1="470.9" x2="290.0" y2="513.0" stroke="#dedc50" stroke-width="0.8"/>
<line x1="293.6" y1="470.9" x2="293.6" y2="513.0" stroke="#3e3c00" stroke-width="3.0"/>
<line x1="295.8" y1="470.9" x2="295.8" y2="513.0" stroke="#dedc50" stroke-width="0.8"/>
<line x1="299.2" y1="470.2" x2="299.2" y2="512.7" stroke="#3e3c00" stroke-width="3.0"/>
<line x1="301.4" y1="470.2" x2="301.4" y2="512.7" stroke="#dedc50" stroke-width="0.8"/>
<line x1="304.6" y1="468.8" x2="304.6" y2="512.3" stroke="#3e3c00" stroke-width="2.9"/>
<line x1="306.8" y1="468.8" x2="306.8" y2="512.3" stroke="#dedc50" stroke-width="0.8"/>
<line x1="309.6" y1="466.8" x2="309.6" y2="511.6" stroke="#3e3c00" stroke-width="2.8"/>
<line x1="311.8" y1="466.8" x2="311.8" y2="511.6" stroke="#dedc50" stroke-width="0.8"/>
<line x1="314.0" y1="464.3" x2="314.0" y2="510.7" stroke="#3e3c00" stroke-width="2.6"/>
<line x1="316.2" y1="464.3" x2="316.2" y2="510.7" stroke="#dedc50" stroke-width="0.8"/>
<line x1="317.7" y1="461.2" x2="317.7" y2="509.6" stroke="#3e3c00" stroke-width="2.5"/>
<line x1="319.9" y1="461.2" x2="319.9" y2="509.6" stroke="#dedc50" stroke-width="0.8"/>
<line x1="320.6" y1="457.7" x2="320.6" y2="508.4" stroke="#3e3c00" stroke-width="2.3"/>
<line x1="322.8" y1="457.7" x2="322.8" y2="508.4" stroke="#dedc50" stroke-width="0.8"/>
<line x1="322.6" y1="454.0" x2="322.6" y2="507.1" stroke="#3e3c00" stroke-width="2.1"/>
<line x1="324.8" y1="454.0" x2="324.8" y2="507.1" stroke="#dedc50" stroke-width="0.8"/>
<line x1="323.6" y1="450.0" x2="323.6" y2="505.7" stroke="#3e3c00" stroke-width="1.9"/>
<line x1="325.8" y1="450.0" x2="325.8" y2="505.7" stroke="#dedc50" stroke-width="0.8"/>
</g>
<path d="M248.3,474 A44.3,28 0 0 0 336.9,474" fill="none" stroke="#111" stroke-width="0.9"/>
<polygon points="324.2,448.0 320.3,451.3 322.6,455.2 317.4,457.5 317.8,461.8 311.9,462.8 310.4,467.0 304.3,466.7 301.1,470.3 295.4,468.7 290.7,471.4 286.0,468.7 280.3,470.3 277.1,466.7 271.0,467.0 269.5,462.8 263.6,461.8 264.0,457.5 258.8,455.2 261.1,451.3 257.2,448.0 261.1,444.7 258.8,440.8 264.0,438.5 263.6,434.2 269.5,433.2 271.0,429.0 277.1,429.3 280.3,425.7 286.0,427.3 290.7,424.6 295.4,427.3 301.1,425.7 304.3,429.3 310.4,429.0 311.9,433.2 317.8,434.2 317.4,438.5 322.6,440.8 320.3,444.7" fill="#dcda00" stroke="#111" stroke-width="0.7" />
<ellipse cx="290.7" cy="448" rx="29.1" ry="21.4" fill="#dedd00" stroke="#111" stroke-width="0.8"/>
<polygon points="197.3,530.3 395.0,492.5 205.0,573.9" fill="#d60404" stroke="#300" stroke-width="0.8" />
<line x1="205" y1="573.9" x2="395" y2="492.5" stroke="#5a3ad0" stroke-width="1.2"/>
<ellipse cx="214" cy="542.2" rx="4.6" ry="4.3" fill="#0f7a0f" stroke="#062806" stroke-width="0.6"/><ellipse cx="214" cy="540.7" rx="4" ry="3" fill="#3ad23a"/><circle cx="214" cy="540.2" r="1.1" fill="#0a500a"/>
<ellipse cx="215.5" cy="552.2" rx="4.6" ry="4.3" fill="#0f7a0f" stroke="#062806" stroke-width="0.6"/><ellipse cx="215.5" cy="550.7" rx="4" ry="3" fill="#3ad23a"/><circle cx="215.5" cy="550.2" r="1.1" fill="#0a500a"/>
<ellipse cx="217" cy="562.2" rx="4.6" ry="4.3" fill="#0f7a0f" stroke="#062806" stroke-width="0.6"/><ellipse cx="217" cy="560.7" rx="4" ry="3" fill="#3ad23a"/><circle cx="217" cy="560.2" r="1.1" fill="#0a500a"/>
<polygon points="408.4,487.8 423.2,478.9 430.1,477.0 431.1,464.0 513.9,433.2 560.3,424.3 688.4,466.0 683.5,499.5 610.0,465.0 546.0,440.5 470.0,461.2" fill="#d2d000" stroke="none" />
<path d="M187.5,582.5 L390,495 L450,467.5 C490,452 520,441 546,440.5 C572,441 592,455 610,465 L680,500 Q697,508 695,517 Q692,535 682.5,540 L205,629 Q185,632 178,620 Q174,605 187.5,582.5 Z" fill="#aaa800" stroke="#111" stroke-width="1.0"/>
<path d="M408,491 L450,471 C490,455 520,444 546,443.5 C572,444 592,458 610,468 L682,503" fill="none" stroke="#2a2a60" stroke-width="0.7"/>
<path d="M189,590 Q180,600 181,612 Q183,622 192,626" fill="none" stroke="#111" stroke-width="0.7"/>
<ellipse cx="528.8" cy="489.3" rx="4.5" ry="3.5" fill="#e8e690" stroke="#222" stroke-width="0.8"/>
<g opacity="0.6"><line x1="395.5" y1="527" x2="395.5" y2="505" stroke="#3a9a40" stroke-width="3.5"/><path d="M391 508 l4.5 -12 l4.5 12z" fill="#3a9a40"/><line x1="398" y1="525" x2="422" y2="520" stroke="#e08a20" stroke-width="3"/><path d="M420 515 l11 3.5 l-10 5z" fill="#e08a20"/><text x="436" y="524" font-size="10" fill="#d08030" font-family="Liberation Serif">X</text></g>
<path d="M475,530 L605,503.8 Q625,500 627.5,520 Q628,532 616,537 L495,565 Q472,570 469,550 Q468,535 475,530 Z" fill="#7c4710" stroke="#1a0a00" stroke-width="1.0"/>
<path d="M475,530 L605,503.8 Q625,500 627.5,520 Q621,512 612,514 L488,537 Q478,540 470,548 Q468,535 475,530 Z" fill="#995a1a" stroke="#1a0a00" stroke-width="0.8"/>
<line x1="487.5" y1="537" x2="480" y2="530" stroke="#111" stroke-width="0.7"/><line x1="612" y1="514" x2="605" y2="504" stroke="#111" stroke-width="0.7"/>
<ellipse cx="606" cy="529.5" rx="6" ry="5" fill="#8a5218" stroke="#2a1000" stroke-width="0.8"/>
<ellipse cx="492.5" cy="551" rx="6" ry="5" fill="#8a5218" stroke="#2a1000" stroke-width="0.8"/>
<defs><linearGradient id="cyl" x1="0" y1="0" x2="1" y2="0"><stop offset="0" stop-color="#d2d000"/><stop offset="0.3" stop-color="#dbda00"/><stop offset="0.75" stop-color="#d8d700"/><stop offset="1" stop-color="#cccb00"/></linearGradient></defs>
<path d="M461,249.5 Q487.5,238 520.6,245.9 L560.3,424.3 Q548,432 540,440.8 Q520,441 513.9,433.2 Z" fill="url(#cyl)" stroke="none"/>
<path d="M461,249.5 Q487.5,238 520.6,245.9" fill="none" stroke="#6040b0" stroke-width="1.6"/>
<polygon points="380.1,279.0 457.5,249.1 464.0,249.7 511.0,428.4 513.9,433.2 431.1,464.0" fill="#b5b5b5" stroke="#111" stroke-width="0.9" />
<polygon points="384.0,282.0 455.0,253.0 500.0,424.0 428.0,445.0" fill="#c3c3c3" stroke="#111" stroke-width="0.7" />
<polygon points="455.0,253.0 463.0,250.0 510.0,428.0 500.0,424.0" fill="#e2e2e2" stroke="#111" stroke-width="0.7" />
<polygon points="428.0,445.0 500.0,424.0 510.0,428.0 513.9,433.2 431.1,464.0" fill="#d9d9d9" stroke="#111" stroke-width="0.7" />
<line x1="429" y1="452" x2="511" y2="430" stroke="#111" stroke-width="0.6"/>
<line x1="383" y1="290" x2="427" y2="452" stroke="#111" stroke-width="0.6"/>
<polygon points="394.6,282.7 407.1,278.2 418.6,319.7 405.9,325.4" fill="#050505" stroke="#333" stroke-width="0.8" />
<polygon points="414.9,273.8 427.4,269.3 438.9,310.8 426.2,316.5" fill="#050505" stroke="#333" stroke-width="0.8" />
<polygon points="435.2,264.9 447.7,260.4 459.2,301.9 446.5,307.6" fill="#050505" stroke="#333" stroke-width="0.8" />
<polygon points="409.3,335.7 421.8,331.2 433.3,372.7 420.6,378.4" fill="#050505" stroke="#333" stroke-width="0.8" />
<polygon points="429.6,326.8 442.1,322.3 453.6,363.8 440.9,369.5" fill="#050505" stroke="#333" stroke-width="0.8" />
<polygon points="449.9,317.9 462.4,313.4 473.9,354.9 461.2,360.6" fill="#050505" stroke="#333" stroke-width="0.8" />
<polygon points="424.0,388.7 436.5,384.2 448.0,425.7 435.3,431.4" fill="#050505" stroke="#333" stroke-width="0.8" />
<polygon points="444.3,379.8 456.8,375.3 468.3,416.8 455.6,422.5" fill="#050505" stroke="#333" stroke-width="0.8" />
<polygon points="464.6,370.9 477.1,366.4 488.6,407.9 475.9,413.6" fill="#050505" stroke="#333" stroke-width="0.8" />
<polygon points="520.6,245.9 528.4,240.6 643.5,295.3 688.4,464.4 686.7,468.9 561.0,423.0" fill="#b5b5b5" stroke="#111" stroke-width="0.9" />
<polygon points="535.0,251.0 640.0,298.0 685.5,458.7 574.9,412.4" fill="#c3c3c3" stroke="#111" stroke-width="0.7" />
<polygon points="520.6,245.9 528.4,240.6 535.0,251.0 574.9,412.4 561.0,423.0" fill="#e2e2e2" stroke="#111" stroke-width="0.7" />
<polygon points="561.0,423.0 574.9,412.4 685.5,458.7 688.4,464.4 686.7,468.9" fill="#d2d2d8" stroke="#111" stroke-width="0.7" />
<line x1="525" y1="246" x2="566" y2="418" stroke="#111" stroke-width="0.6"/>
<line x1="568" y1="418" x2="686" y2="465" stroke="#e8e8ee" stroke-width="1.5"/>
<line x1="640" y1="298" x2="643.5" y2="295.3" stroke="#111" stroke-width="0.6"/>
<polygon points="550.6,258.2 580.6,271.7 596.5,334.2 566.5,320.0" fill="#050505" stroke="#333" stroke-width="0.8" />
<polygon points="601.8,283.0 631.8,296.3 647.7,358.9 617.7,346.5" fill="#050505" stroke="#333" stroke-width="0.8" />
<polygon points="573.6,343.0 603.6,357.1 619.5,420.7 589.4,406.6" fill="#050505" stroke="#333" stroke-width="0.8" />
<polygon points="624.8,369.5 654.8,381.8 670.7,445.4 640.6,431.3" fill="#050505" stroke="#333" stroke-width="0.8" />
<polygon points="107.4,431.6 120.5,429.5 124.7,457.4 113.1,458.1" fill="#14c414" stroke="#041a04" stroke-width="1.2" />
<polygon points="121.2,428.8 133.2,426.3 136.7,430.5 136.0,454.5 125.0,457.0" fill="#12c012" stroke="#041a04" stroke-width="1.2" />
<line x1="114" y1="433" x2="118" y2="455" stroke="#3ef03e" stroke-width="2.2"/>
<line x1="128" y1="430" x2="130" y2="453" stroke="#3ef03e" stroke-width="2.2"/>
<polygon points="141.4,560.1 154.5,558.0 158.7,585.9 147.1,586.6" fill="#14c414" stroke="#041a04" stroke-width="1.2" />
<polygon points="155.2,557.3 167.2,554.8 170.7,559.0 170.0,583.0 159.0,585.5" fill="#12c012" stroke="#041a04" stroke-width="1.2" />
<line x1="148" y1="561.5" x2="152" y2="583.5" stroke="#3ef03e" stroke-width="2.2"/>
<line x1="162" y1="558.5" x2="164" y2="581.5" stroke="#3ef03e" stroke-width="2.2"/>
</svg>
</body></html>
